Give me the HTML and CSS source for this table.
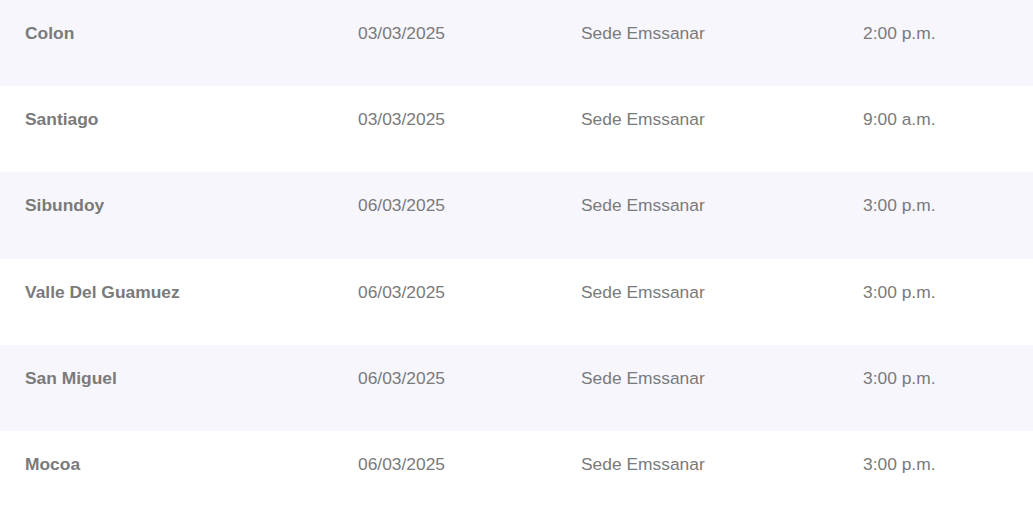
FILE: index.html
```html
<!doctype html>
<html>

<head>
    <meta charset="utf-8">
    <title>Programación</title>
    <meta name="viewport" content="width=device-width,initial-scale=1">
    <link rel="stylesheet" href="styles.css">
</head>

<body>
    <div class="table">
        <div class="row">
            <div class="cell city">Colon</div>
            <div class="cell">03/03/2025</div>
            <div class="cell">Sede Emssanar</div>
            <div class="cell">2:00 p.m.</div>
        </div>
        <div class="row">
            <div class="cell city">Santiago</div>
            <div class="cell">03/03/2025</div>
            <div class="cell">Sede Emssanar</div>
            <div class="cell">9:00 a.m.</div>
        </div>
        <div class="row">
            <div class="cell city">Sibundoy</div>
            <div class="cell">06/03/2025</div>
            <div class="cell">Sede Emssanar</div>
            <div class="cell">3:00 p.m.</div>
        </div>
        <div class="row">
            <div class="cell city">Valle Del Guamuez</div>
            <div class="cell">06/03/2025</div>
            <div class="cell">Sede Emssanar</div>
            <div class="cell">3:00 p.m.</div>
        </div>
        <div class="row">
            <div class="cell city">San Miguel</div>
            <div class="cell">06/03/2025</div>
            <div class="cell">Sede Emssanar</div>
            <div class="cell">3:00 p.m.</div>
        </div>
        <div class="row">
            <div class="cell city">Mocoa</div>
            <div class="cell">06/03/2025</div>
            <div class="cell">Sede Emssanar</div>
            <div class="cell">3:00 p.m.</div>
        </div>
    </div>
</body>

</html>
```
FILE: styles.css
```css
body {
    margin: 0;
    font-family: "Liberation Sans", Arial, sans-serif;
    background: #fff;
    color: #7a7a7a;
}

.table {
    display: flex;
    flex-direction: column;
}

.row {
    display: grid;
    grid-template-columns: 333px 223px 282px 1fr;
    height: 86.2px;
    box-sizing: border-box;
    padding-top: 23px;
}

.row:nth-child(odd) {
    background: #f7f6fd;
}

.cell {
    padding-left: 25px;
    font-size: 17.4px;
    line-height: 20px;
}

.city {
    font-weight: bold;
}
```
